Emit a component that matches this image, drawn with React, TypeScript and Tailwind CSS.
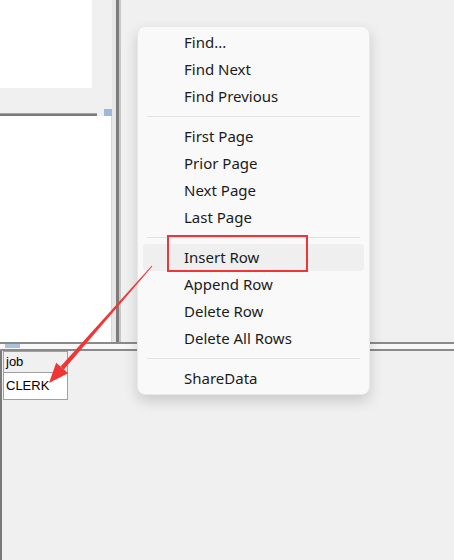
import React from "react";

type MenuEntry = { label: string; active?: boolean } | "sep";

const menuItems: MenuEntry[] = [
    { label: "Find..." },
    { label: "Find Next" },
    { label: "Find Previous" },
    "sep",
    { label: "First Page" },
    { label: "Prior Page" },
    { label: "Next Page" },
    { label: "Last Page" },
    "sep",
    { label: "Insert Row", active: true },
    { label: "Append Row" },
    { label: "Delete Row" },
    { label: "Delete All Rows" },
    "sep",
    { label: "ShareData" },
];

// tapered red arrow from the menu down to the grid cell
const Arrow = () => {
    const sx = 152, sy = 266;
    const tx = 49, ty = 383;
    const len = Math.hypot(tx - sx, ty - sy);
    const dx = (tx - sx) / len, dy = (ty - sy) / len;
    const px = -dy, py = dx;
    const headLen = 20, headHalf = 8;
    const bx = tx - dx * headLen, by = ty - dy * headLen;
    const shaft = [
        [sx + px * 0.5, sy + py * 0.5],
        [bx + px * 2.2, by + py * 2.2],
        [bx - px * 2.2, by - py * 2.2],
        [sx - px * 0.5, sy - py * 0.5],
    ];
    const head = [
        [tx, ty],
        [bx + px * headHalf, by + py * headHalf],
        [bx - px * headHalf, by - py * headHalf],
    ];
    const pts = (a: number[][]) => a.map((p) => p.join(",")).join(" ");
    return (
        <svg className="absolute left-0 top-0 pointer-events-none" width={454} height={560}>
            <polygon points={pts(shaft)} fill="#ef3535" />
            <polygon points={pts(head)} fill="#ef3535" />
        </svg>
    );
};

const ContextMenu = () => (
    <div className="absolute left-[137px] top-[26px] w-[233px] pt-[2px] pb-[2px] bg-[#f9f9f9] rounded-lg border border-[#e8e8e8] shadow-[0_6px_14px_rgba(0,0,0,0.16)] font-['Noto_Sans',sans-serif] text-[15px] text-[#1b1b1b]">
        {menuItems.map((item, i) =>
            item === "sep" ? (
                <div key={i} className="h-[13px] flex items-center px-[9px]">
                    <div className="h-px w-full bg-[#e2e2e2]" />
                </div>
            ) : (
                <div
                    key={i}
                    className={
                        item.active
                            ? "relative mx-[5px] h-[27px] flex items-center pl-[41px] rounded bg-[#efefef]"
                            : "mx-[5px] h-[27px] flex items-center pl-[41px]"
                    }
                >
                    {item.label}
                    {item.active && (
                        <div className="absolute left-[24px] top-[-9px] w-[141px] h-[37px] border-2 border-[#ef3535]" />
                    )}
                </div>
            )
        )}
    </div>
);

export default function App() {
    return (
        <div className="relative w-[454px] h-[560px] overflow-hidden bg-[#f0f0f0]">
            {/* upper panes */}
            <div className="flex h-[342px]">
                <div className="w-[112px] flex flex-col">
                    <div className="h-[109px]">
                        <div className="w-[92px] h-[88px] bg-white" />
                    </div>
                    <div className="h-[7px] flex items-end">
                        <div className="w-[97px] h-[3px] bg-[#7a7a7a] border-t border-[#a5a5a5]" />
                        <div className="w-[7px]" />
                        <div className="w-[8px] h-[7px] bg-[#9db8da]" />
                    </div>
                    <div className="flex-1 bg-white border-r border-[#d8d8d8]" />
                </div>
                <div className="w-[4px] bg-[#e6e6e6]" />
                <div className="w-[3px] bg-[#7c7c7c]" />
                <div className="w-[2px] bg-[#c8c8c8]" />
                <div className="flex-1" />
            </div>

            {/* horizontal splitter */}
            <div className="h-[2px] bg-[#8a8a8a]" />
            <div className="h-[5px] bg-[#f8f8f8] relative">
                <div className="absolute left-[5px] top-0 w-[15px] h-[4px] bg-[#a9c1df]" />
            </div>
            <div className="h-[2px] bg-[#8a8a8a]" />

            {/* lower pane with the grid */}
            <div className="flex h-[209px]">
                <div className="w-[2px] bg-[#7a7a7a]" />
                <div className="pl-[1px] font-['Liberation_Sans',sans-serif]">
                    <div className="w-[65px] h-[22px] border border-[#a0a0a0] bg-[#f0f0f0] px-[2px] text-[13px] leading-[20px] text-black">
                        job
                    </div>
                    <div className="w-[65px] h-[27px] border border-t-0 border-[#a0a0a0] bg-white px-[2px] text-[13px] leading-[26px] text-black">
                        CLERK
                    </div>
                </div>
            </div>

            <ContextMenu />
            <Arrow />
        </div>
    );
}
